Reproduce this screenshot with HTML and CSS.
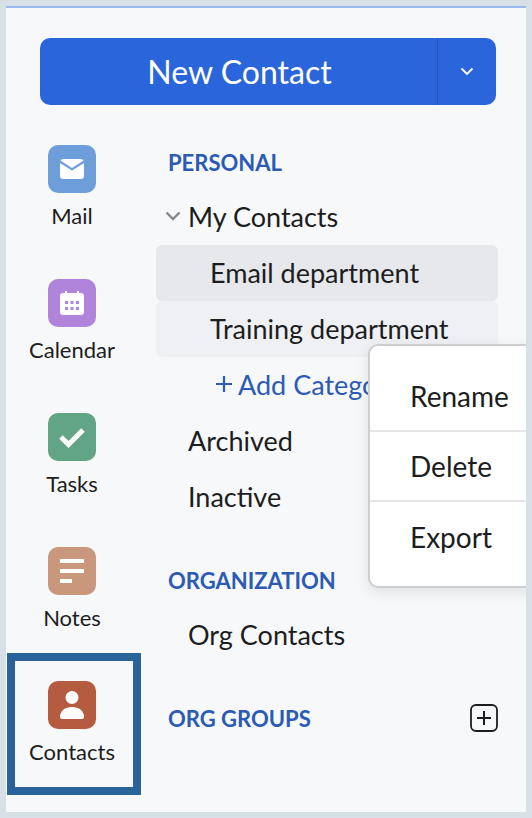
FILE: index.html

```html
<!DOCTYPE html>
<html lang="en">
<head>
  <meta charset="UTF-8" />
  <meta name="viewport" content="width=device-width, initial-scale=1.0" />
  <title>Contacts</title>
  <link rel="stylesheet" href="styles.css">
</head>
<body>

<div class="panel">
  <div class="new-btn">
    <span class="new-label">New Contact</span>
    <span class="new-arrow">
      <svg width="14" height="9" viewBox="0 0 14 9"><path d="M1.500 1.500 7 7l5.500-5.500" fill="none" stroke="#fff" stroke-width="1.900"/></svg>
    </span>
  </div>

  <div class="columns">
    <nav class="rail">
      <div class="app">
        <span class="app-icon mail">
          <svg width="24" height="20" viewBox="0 0 24 20"><path d="M3 0h18a3 3 0 0 1 2.600 1.500L12 9 .4 1.500A3 3 0 0 1 3 0z" fill="#fff"/><path d="M0 4l12 7.600L24 4v13a3 3 0 0 1-3 3H3a3 3 0 0 1-3-3z" fill="#fff"/></svg>
        </span>
        <span class="app-name">Mail</span>
      </div>
      <div class="app">
        <span class="app-icon calendar">
          <svg width="24" height="24" viewBox="0 0 24 24"><path d="M3 2h2V0h2v2h10V0h2v2h2a3 3 0 0 1 3 3v16a3 3 0 0 1-3 3H3a3 3 0 0 1-3-3V5a3 3 0 0 1 3-3z" fill="#fff"/><g fill="#b084da"><rect x="5" y="10" width="3" height="3"/><rect x="10.500" y="10" width="3" height="3"/><rect x="16" y="10" width="3" height="3"/><rect x="5" y="16" width="3" height="3"/><rect x="10.500" y="16" width="3" height="3"/><rect x="16" y="16" width="3" height="3"/></g></svg>
        </span>
        <span class="app-name">Calendar</span>
      </div>
      <div class="app">
        <span class="app-icon tasks">
          <svg width="28" height="22" viewBox="0 0 28 22"><path d="M3 11l7.500 7.500L25 4" fill="none" stroke="#fff" stroke-width="5"/></svg>
        </span>
        <span class="app-name">Tasks</span>
      </div>
      <div class="app">
        <span class="app-icon notes">
          <svg width="24" height="24" viewBox="0 0 24 24" fill="#fff"><rect width="24" height="4"/><rect y="10" width="24" height="4"/><rect y="20" width="12" height="4"/></svg>
        </span>
        <span class="app-name">Notes</span>
      </div>
      <div class="app active">
        <span class="app-icon contacts">
          <svg width="26" height="28" viewBox="0 0 26 28" fill="#fff"><circle cx="13" cy="6.500" r="6.500"/><path d="M1 26c0-6 5-10 12-10s12 4 12 10a2 2 0 0 1-2 2H3a2 2 0 0 1-2-2z"/></svg>
        </span>
        <span class="app-name">Contacts</span>
      </div>
    </nav>

    <div class="tree">
      <div class="heading">PERSONAL</div>
      <div class="row top">
        <svg class="caret" width="16" height="10" viewBox="0 0 16 10"><path d="M1.500 1.500 8 8l6.500-6.500" fill="none" stroke="#85878b" stroke-width="2.400"/></svg>
        My Contacts
      </div>
      <div class="row sub selected">Email department</div>
      <div class="row sub hovered">Training department</div>
      <div class="row add">
        <svg class="plus" width="18" height="18" viewBox="0 0 18 18"><path d="M9 1v16M1 9h16" stroke="#2b5bb5" stroke-width="2.200"/></svg>
        Add Category
      </div>
      <div class="row plain">Archived</div>
      <div class="row plain">Inactive</div>

      <div class="heading org">ORGANIZATION</div>
      <div class="row plain org-row">Org Contacts</div>

      <div class="heading groups">
        ORG GROUPS
        <svg width="28" height="28" viewBox="0 0 28 28"><rect x="1" y="1" width="26" height="26" rx="5" fill="none" stroke="#1c1d20" stroke-width="1.800"/><path d="M14 7v14M7 14h14" stroke="#1c1d20" stroke-width="2"/></svg>
      </div>
    </div>
  </div>

  <div class="menu">
    <div class="menu-item">Rename</div>
    <div class="menu-item">Delete</div>
    <div class="menu-item">Export</div>
  </div>
</div>

</body>
</html>
```

FILE: styles.css

```css
html, body { height: 100%; }
body { margin: 0; background: #d7e0e5; color: #1c1d20; font-family: Lato, sans-serif; overflow: hidden; }

.panel { position: relative; box-sizing: border-box; width: 520px; height: 806px; margin: 6px 6px 0; background: #f7f8fa; border-top: 2px solid #9ab8f0; overflow: hidden; }

.new-btn { display: flex; height: 67px; margin: 30px 30px 0 34px; background: #2b65dc; border-radius: 10px; color: #fff; }
.new-label { flex: 1; display: flex; align-items: center; justify-content: center; padding-left: 2px; font-size: 32px; }
.new-arrow { width: 58px; display: flex; align-items: center; justify-content: center; border-left: 1px solid #2556b8; }

.columns { display: flex; }

.rail { width: 134px; margin-top: 40px; margin-left: 1px; flex-shrink: 0; }
.app { position: relative; box-sizing: border-box; height: 134px; padding-right: 4px; display: flex; flex-direction: column; align-items: center; }
.app-icon { width: 48px; height: 48px; border-radius: 10px; display: flex; align-items: center; justify-content: center; }
.app-name { margin-top: 8px; font-size: 22px; line-height: 30px; }
.app.active::after { content: ""; position: absolute; left: 0; right: 0; top: -28px; height: 142px; box-sizing: border-box; border: 8px solid #2a6399; }

.mail { background: #6d9eda; }
.calendar { background: #b084da; }
.tasks { background: #62a585; }
.notes { background: #c9977c; }
.contacts { background: #b55c40; }

.tree { flex: 1; margin: 37px 28px 0 15px; }
.heading { height: 40px; margin-bottom: 7px; display: flex; align-items: center; justify-content: space-between; padding-left: 12px; color: #2b5bb5; font-size: 22px; font-weight: 700; }
.row { box-sizing: border-box; height: 56px; padding-bottom: 2px; display: flex; align-items: center; font-size: 27px; border-radius: 6px; }
.top { padding-left: 9px; gap: 7px; }
.sub { padding-left: 54px; }
.selected { background: #e7e8ec; }
.hovered { background: #eff0f3; }
.add { padding-left: 59px; gap: 5px; color: #2b5bb5; }
.plain { padding-left: 32px; }
.org { margin-top: 35px; margin-bottom: 9px; }
.org-row { height: 52px; }
.groups { margin-top: 37px; }

.menu { position: absolute; left: 362px; top: 336px; width: 240px; box-sizing: border-box; padding: 16px 0 14px; background: #fff; border: 2px solid #cdced0; border-radius: 10px; box-shadow: 0 4px 14px rgba(0, 0, 0, 0.1); }
.menu-item { height: 70px; display: flex; align-items: center; box-sizing: border-box; padding-left: 40px; font-size: 28px; border-bottom: 2px solid #e6e6e8; }
.menu-item:last-child { border-bottom: none; }
```
